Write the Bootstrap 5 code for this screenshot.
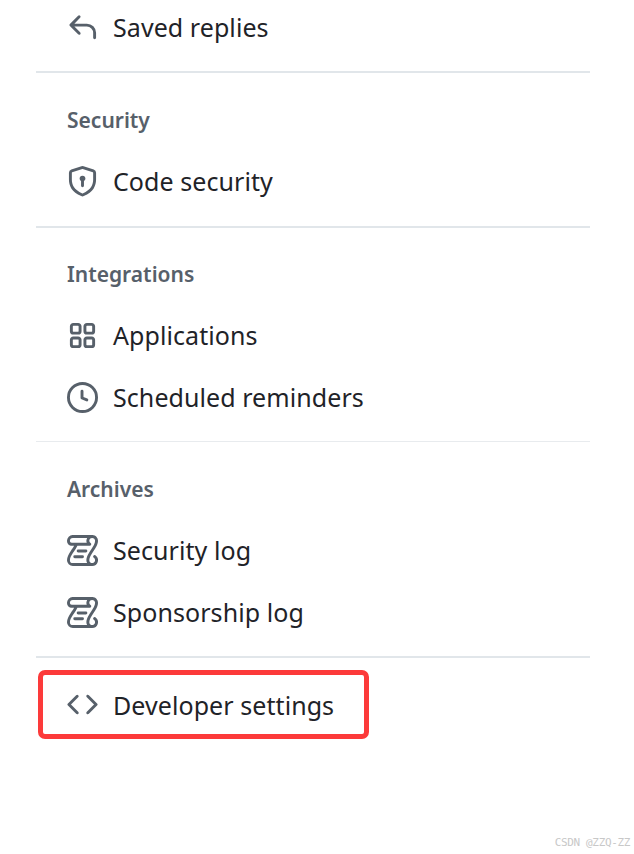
<!DOCTYPE html>
<html lang="en">
<head>
<meta charset="utf-8">
<title>Settings</title>
<link rel="stylesheet" href="https://cdn.jsdelivr.net/npm/bootstrap@5.3.0/dist/css/bootstrap.min.css">
<style>
html,body{height:854px;overflow:hidden;background:#fff}
body{font-family:"Noto Sans","Open Sans",sans-serif;color:#1f2328}
.side{width:554px;margin-left:36px;margin-top:-4px}
.rowitem{height:62px;padding-left:31px;gap:15px;font-size:25px;line-height:32px;color:#1f2328;letter-spacing:.07px}
.rowitem svg{width:31px;height:31px;fill:#57606a;flex:none}
.heading{font-size:21px;font-weight:600;color:#57606a;line-height:30px;padding-left:31px;letter-spacing:0;margin-bottom:15px}
.rule{height:2px;background:#e1e6ea;margin:0;border:0;opacity:1}
.rule.thin{height:1px;background:#e8ebee}
.firstrule{margin-top:13px}
.sec{padding-top:32px;padding-bottom:14px}
.sec.snug{padding-top:31px;padding-bottom:13px}
.sec.snugend{padding-bottom:13px}
.flagged{width:331px;height:69px;margin:12px 0 0 2px;border:5px solid #fc3a3a;border-radius:7px;padding-left:24px}
.mark-text{position:absolute;right:4px;bottom:5px;font:11px "DejaVu Sans Mono",monospace;color:#c8c8c8;letter-spacing:-.35px}
</style>
</head>
<body>
<div class="side">
  <div class="rowitem d-flex align-items-center"><svg viewBox="0 0 16 16"><path d="M6.78 1.97a.75.75 0 0 1 0 1.06L3.81 6h6.44A4.75 4.75 0 0 1 15 10.75v2.5a.75.75 0 0 1-1.5 0v-2.5a3.25 3.25 0 0 0-3.25-3.25H3.81l2.97 2.97a.749.749 0 0 1-.326 1.275.749.749 0 0 1-.734-.215L1.47 7.28a.75.75 0 0 1 0-1.06l4.25-4.25a.75.75 0 0 1 1.06 0Z"/></svg><span>Saved replies</span></div>
  <hr class="rule firstrule">
  <div class="sec">
    <div class="heading">Security</div>
    <div class="rowitem d-flex align-items-center"><svg viewBox="0 0 16 16"><path d="m8.533.133 5.25 1.68A1.75 1.75 0 0 1 15 3.48V7c0 1.566-.32 3.182-1.303 4.682-.983 1.498-2.585 2.813-5.032 3.855a1.697 1.697 0 0 1-1.33 0c-2.447-1.042-4.049-2.357-5.032-3.855C1.32 10.182 1 8.566 1 7V3.48a1.75 1.75 0 0 1 1.217-1.667l5.25-1.68a1.748 1.748 0 0 1 1.066 0Zm-.61 1.429.001.001-5.25 1.68a.251.251 0 0 0-.174.237V7c0 1.36.275 2.666 1.057 3.859.784 1.194 2.121 2.342 4.366 3.298a.196.196 0 0 0 .154 0c2.245-.957 3.582-2.103 4.366-3.297C13.225 9.666 13.5 8.358 13.5 7V3.48a.25.25 0 0 0-.174-.238l-5.25-1.68a.25.25 0 0 0-.153 0ZM9.5 6.5c0 .536-.286 1.032-.75 1.3v2.45a.75.75 0 0 1-1.5 0V7.8A1.5 1.5 0 1 1 9.5 6.5Z"/></svg><span>Code security</span></div>
  </div>
  <hr class="rule">
  <div class="sec snug">
    <div class="heading">Integrations</div>
    <div class="rowitem d-flex align-items-center"><svg viewBox="0 0 16 16"><path d="M1.5 3.25c0-.966.784-1.75 1.75-1.75h2.5c.966 0 1.75.784 1.75 1.75v2.5A1.75 1.75 0 0 1 5.75 7.5h-2.5A1.75 1.75 0 0 1 1.5 5.75Zm7 0c0-.966.784-1.75 1.75-1.75h2.5c.966 0 1.75.784 1.75 1.75v2.5a1.75 1.75 0 0 1-1.75 1.75h-2.5A1.75 1.75 0 0 1 8.5 5.75Zm-7 7c0-.966.784-1.75 1.75-1.75h2.5c.966 0 1.75.784 1.75 1.75v2.5a1.75 1.75 0 0 1-1.75 1.75h-2.5a1.75 1.75 0 0 1-1.75-1.75Zm7 0c0-.966.784-1.75 1.75-1.75h2.5c.966 0 1.75.784 1.75 1.75v2.5a1.75 1.75 0 0 1-1.75 1.75h-2.5a1.75 1.75 0 0 1-1.75-1.75ZM3.25 3a.25.25 0 0 0-.25.25v2.5c0 .138.112.25.25.25h2.5A.25.25 0 0 0 6 5.75v-2.5A.25.25 0 0 0 5.75 3Zm7 0a.25.25 0 0 0-.25.25v2.5c0 .138.112.25.25.25h2.5a.25.25 0 0 0 .25-.25v-2.5a.25.25 0 0 0-.25-.25Zm-7 7a.25.25 0 0 0-.25.25v2.5c0 .138.112.25.25.25h2.5a.25.25 0 0 0 .25-.25v-2.5a.25.25 0 0 0-.25-.25Zm7 0a.25.25 0 0 0-.25.25v2.5c0 .138.112.25.25.25h2.5a.25.25 0 0 0 .25-.25v-2.5a.25.25 0 0 0-.25-.25Z"/></svg><span>Applications</span></div>
    <div class="rowitem d-flex align-items-center"><svg viewBox="0 0 16 16"><path d="M8 0a8 8 0 1 1 0 16A8 8 0 0 1 8 0ZM1.5 8a6.5 6.5 0 1 0 13 0 6.5 6.5 0 0 0-13 0Zm7-3.25v2.992l2.028.812a.75.75 0 0 1-.557 1.392l-2.5-1A.751.751 0 0 1 7 8.25v-3.5a.75.75 0 0 1 1.5 0Z"/></svg><span>Scheduled reminders</span></div>
  </div>
  <hr class="rule thin">
  <div class="sec snugend">
    <div class="heading">Archives</div>
    <div class="rowitem d-flex align-items-center"><svg viewBox="0 0 16 16"><path d="M5 8.25a.75.75 0 0 1 .75-.75h4a.75.75 0 0 1 0 1.5h-4A.75.75 0 0 1 5 8.25ZM4 10.5A.75.75 0 0 0 4 12h4a.75.75 0 0 0 0-1.5H4Z"/><path d="M13-.005c1.654 0 3 1.328 3 3 0 .982-.338 1.933-.783 2.818-.443.879-1.028 1.758-1.582 2.588l-.011.017c-.568.853-1.104 1.659-1.501 2.446-.398.789-.623 1.494-.623 2.136a1.5 1.5 0 1 0 2.333-1.248.75.75 0 0 1 .834-1.246A3 3 0 0 1 13 16H3a3 3 0 0 1-3-3c0-1.582.891-3.135 1.777-4.506.209-.322.418-.637.623-.946.473-.709.923-1.386 1.287-2.048H2.51c-.576 0-1.381-.133-1.907-.783A2.68 2.68 0 0 1 0 2.995a3 3 0 0 1 3-3Zm0 1.5a1.5 1.5 0 0 0-1.5 1.5c0 .476.223.834.667 1.132A.75.75 0 0 1 11.75 5.5H5.368c-.467 1.003-1.141 2.015-1.773 2.963-.192.289-.381.571-.558.845C2.13 10.711 1.5 11.916 1.5 13A1.5 1.5 0 0 0 3 14.5h7.401A2.989 2.989 0 0 1 10 13c0-.979.338-1.928.784-2.812.441-.875 1.023-1.748 1.575-2.576l.017-.026c.568-.853 1.103-1.658 1.501-2.448.398-.79.623-1.497.623-2.143 0-.838-.669-1.5-1.5-1.5Zm-10 0a1.5 1.5 0 0 0-1.5 1.5c0 .321.1.569.27.778.097.12.325.227.74.227h7.674A2.737 2.737 0 0 1 10 2.995c0-.546.146-1.059.401-1.5Z"/></svg><span>Security log</span></div>
    <div class="rowitem d-flex align-items-center"><svg viewBox="0 0 16 16"><path d="M5 8.25a.75.75 0 0 1 .75-.75h4a.75.75 0 0 1 0 1.5h-4A.75.75 0 0 1 5 8.25ZM4 10.5A.75.75 0 0 0 4 12h4a.75.75 0 0 0 0-1.5H4Z"/><path d="M13-.005c1.654 0 3 1.328 3 3 0 .982-.338 1.933-.783 2.818-.443.879-1.028 1.758-1.582 2.588l-.011.017c-.568.853-1.104 1.659-1.501 2.446-.398.789-.623 1.494-.623 2.136a1.5 1.5 0 1 0 2.333-1.248.75.75 0 0 1 .834-1.246A3 3 0 0 1 13 16H3a3 3 0 0 1-3-3c0-1.582.891-3.135 1.777-4.506.209-.322.418-.637.623-.946.473-.709.923-1.386 1.287-2.048H2.51c-.576 0-1.381-.133-1.907-.783A2.68 2.68 0 0 1 0 2.995a3 3 0 0 1 3-3Zm0 1.5a1.5 1.5 0 0 0-1.5 1.5c0 .476.223.834.667 1.132A.75.75 0 0 1 11.75 5.5H5.368c-.467 1.003-1.141 2.015-1.773 2.963-.192.289-.381.571-.558.845C2.13 10.711 1.5 11.916 1.5 13A1.5 1.5 0 0 0 3 14.5h7.401A2.989 2.989 0 0 1 10 13c0-.979.338-1.928.784-2.812.441-.875 1.023-1.748 1.575-2.576l.017-.026c.568-.853 1.103-1.658 1.501-2.448.398-.79.623-1.497.623-2.143 0-.838-.669-1.5-1.5-1.5Zm-10 0a1.5 1.5 0 0 0-1.5 1.5c0 .321.1.569.27.778.097.12.325.227.74.227h7.674A2.737 2.737 0 0 1 10 2.995c0-.546.146-1.059.401-1.5Z"/></svg><span>Sponsorship log</span></div>
  </div>
  <hr class="rule">
  <div class="rowitem flagged d-flex align-items-center"><svg viewBox="0 0 16 16"><path d="m11.28 3.22 4.25 4.25a.75.75 0 0 1 0 1.06l-4.25 4.25a.749.749 0 0 1-1.275-.326.749.749 0 0 1 .215-.734L13.94 8l-3.72-3.72a.749.749 0 0 1 .326-1.275.749.749 0 0 1 .734.215Zm-6.56 0a.751.751 0 0 1 1.042.018.751.751 0 0 1 .018 1.042L2.06 8l3.72 3.72a.749.749 0 0 1-.326 1.275.749.749 0 0 1-.734-.215L.47 8.53a.75.75 0 0 1 0-1.06Z"/></svg><span>Developer settings</span></div>
</div>
<div class="mark-text">CSDN @ZZQ-ZZ</div>
</body>
</html>
